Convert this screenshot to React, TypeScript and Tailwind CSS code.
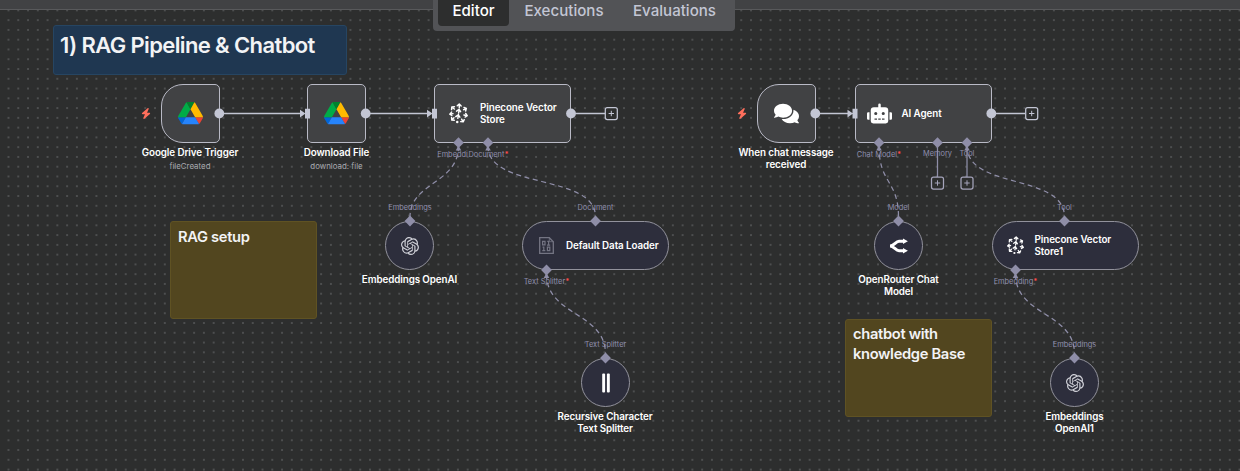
import React from "react";
import { FaComments, FaRobot } from "react-icons/fa";
import { FaBolt } from "react-icons/fa6";
import { SiOpenai } from "react-icons/si";

type Pos = { x: number; y: number };

const at = (x: number, y: number, w?: number, h?: number): React.CSSProperties => ({
  left: x,
  top: y,
  width: w,
  height: h,
});

function DriveIcon() {
  return (
    <svg width="25" height="22.3" viewBox="0 0 87.3 78">
      <path d="m6.6 66.85 3.85 6.65c.8 1.4 1.95 2.5 3.3 3.3l13.75-23.8h-27.5c0 1.55.4 3.1 1.2 4.5z" fill="#0066da" />
      <path d="m43.65 25-13.75-23.8c-1.35.8-2.5 1.9-3.3 3.3l-25.4 44a9.06 9.06 0 0 0 -1.2 4.5h27.5z" fill="#00ac47" />
      <path d="m73.55 76.8c1.35-.8 2.5-1.9 3.3-3.3l1.6-2.75 7.65-13.25c.8-1.4 1.2-2.95 1.2-4.5h-27.502l5.852 11.5z" fill="#ea4335" />
      <path d="m43.65 25 13.75-23.8c-1.35-.8-2.9-1.2-4.5-1.2h-18.5c-1.6 0-3.15.45-4.5 1.2z" fill="#00832d" />
      <path d="m59.8 53h-32.3l-13.75 23.8c1.35.8 2.9 1.2 4.5 1.2h50.8c1.6 0 3.15-.45 4.5-1.2z" fill="#2684fc" />
      <path d="m73.4 26.5-12.7-22c-.8-1.4-1.95-2.5-3.3-3.3l-13.75 23.8 16.15 28h27.45c0-1.55-.4-3.1-1.2-4.5z" fill="#ffba00" />
    </svg>
  );
}

function PineconeIcon({ size }: { size: number }) {
  return (
    <svg width={size} height={size * 1.1} viewBox="0 0 20 22" fill="none" stroke="#fff" strokeWidth="1.5" strokeLinecap="round" strokeLinejoin="round">
      <path d="M10.8 5V1.2M8.7 3l2.1-2 2 2.2M10.1 10.6l.7-3.8M8 8.6l2.6-2 1.6 2.6M9.3 16.2l.7-3.8M7.2 14.4l2.6-2 1.6 2.6" />
      <path d="M5.6 6.3 3 4.4M2.7 7l.2-2.8 2.8-.2M15.4 7.1l2.7-1.3M15.8 4.6l2.5 1.1-.8 2.7M4.2 11.2l-3.3.5M2.7 9.6.8 11.7l2.2 1.5M15.7 12.6l3.3.8M17.6 11l1.6 2.4-2.2 1.4M5.2 15.6l-2.2 2.2M2.7 15.3l.2 2.7 2.7.1M13.3 17l1.5 2.8M12.3 19.6l2.6.3 1.1-2.4" />
      <circle cx="8.700" cy="20" r="1.300" fill="#fff" stroke="none" />
    </svg>
  );
}

function DataIcon() {
  return (
    <svg width="15" height="17" viewBox="0 0 15 17" fill="none" stroke="#747583">
      <path d="M.7.7h9.6l4 4v11.6H.7z" strokeWidth="1.300" />
      <path d="M10.3.7v4h4" strokeWidth=".8" />
      <path d="M3.6 4.4h2.4v3.5H3.6zM8.3 4.400h1.300v3.700M8 8.100h3.200M3.600 10.200h1.200v3.500M3.300 13.700h3M8.400 10.200h2.400v3.500H8.400z" strokeWidth="1.200" />
    </svg>
  );
}

function RouterIcon() {
  return (
    <svg width="20" height="18" viewBox="0 0 20 18" fill="none" stroke="#fff" strokeWidth="3">
      <path d="M1 9c4 0 5.500-4.700 9-4.700h5M1 9c4 0 5.500 4.700 9 4.700h5" />
      <path d="M14 1.500v5.600L18.900 4.300zM14 10.900v5.600l4.900-2.800z" fill="#fff" stroke="none" />
    </svg>
  );
}

function SplitIcon() {
  return (
    <svg width="8" height="20" viewBox="0 0 8 20" fill="#fff">
      <rect x="0.200" y="0.500" width="2.900" height="19" rx="1" />
      <rect x="4.900" y="0.500" width="2.900" height="19" rx="1" />
    </svg>
  );
}

function Box({ x, w, trigger, children }: { x: number; w: number; trigger?: boolean; children: React.ReactNode }) {
  return (
    <div
      className={`absolute flex items-center border-[1.25px] border-[#b9bac6] bg-[#414244] ${
        trigger ? "justify-center rounded-l-[22px] rounded-r-[5px]" : w < 100 ? "justify-center rounded-[5px]" : "rounded-[5px]"
      }`}
      style={at(x, 84, w, 59)}
    >
      {children}
    </div>
  );
}

function Sub({ x, y, w, children }: { x: number; y: number; w: number; children: React.ReactNode }) {
  return (
    <div
      className={`absolute flex items-center rounded-full border border-[#92929c] bg-[#2d2e3c] ${w < 60 ? "justify-center" : ""}`}
      style={at(x, y, w, 49)}
    >
      {children}
    </div>
  );
}

function NodeText({ lines }: { lines: string[] }) {
  return (
    <div className="flex flex-col text-[9.8px] leading-[12px] font-semibold tracking-[-0.08px] whitespace-nowrap text-white">
      {lines.map((l) => (
        <span key={l}>{l}</span>
      ))}
    </div>
  );
}

function Title({ x, y, lines, sub }: Pos & { lines: string[]; sub?: string }) {
  return (
    <div className="absolute flex w-[140px] flex-col items-center text-center whitespace-nowrap" style={at(x - 70, y)}>
      <div className="flex flex-col items-center">
        {lines.map((l) => (
          <span key={l} className="text-[9.8px] leading-[12px] font-semibold tracking-[-0.08px] text-white">{l}</span>
        ))}
      </div>
      {sub && <span className="mt-[2px] text-[7.9px] leading-[11px] text-[#a8a9ae]">{sub}</span>}
    </div>
  );
}

function PortLabel({ x, y, text, required }: Pos & { text: string; required?: boolean }) {
  return (
    <div className="absolute flex w-[80px] justify-center whitespace-nowrap text-[7.4px] leading-[10px] text-[#8f8ead]" style={at(x - 40, y - 4)}>
      {text}
      {required && <span className="font-bold text-[#ff4a4a]">*</span>}
    </div>
  );
}

const dashed = [
  "M458.500 146C458.500 184 410 182 410 217",
  "M488 146C488 190 595.500 173 595.500 217",
  "M546.500 274C546.500 316 605.500 312 605.500 354",
  "M879 146C879 184 898.500 180 898.500 217",
  "M967 146C967 190 1064.500 173 1064.500 217",
  "M1015.500 274C1015.500 316 1074.500 312 1074.500 354",
];

const diamonds: Pos[] = [
  { x: 458.5, y: 142.7 }, { x: 488, y: 142.7 }, { x: 410, y: 221 }, { x: 595.5, y: 221 },
  { x: 546.5, y: 270 }, { x: 605.5, y: 358 }, { x: 879, y: 142.7 }, { x: 937.5, y: 142.7 },
  { x: 967, y: 142.7 }, { x: 898.5, y: 221 }, { x: 1064.5, y: 221 }, { x: 1015.5, y: 270 }, { x: 1074.5, y: 358 },
];

const stubs: Pos[] = [
  { x: 458.5, y: 148 }, { x: 488, y: 148 }, { x: 546.5, y: 275.5 },
  { x: 879, y: 148 }, { x: 967, y: 148 }, { x: 1015.5, y: 275.5 },
];

function Grid() {
  return (
    <svg className="absolute inset-0" width="1240" height="471">
      <defs>
        <pattern id="dots" x="3.610" y="5.500" width="9.770" height="9.770" patternUnits="userSpaceOnUse">
          <circle cx="4.885" cy="4.885" r="0.680" fill="#85868a" />
        </pattern>
      </defs>
      <rect width="1240" height="471" fill="url(#dots)" />
    </svg>
  );
}

function Edges() {
  return (
    <svg className="absolute inset-0" width="1240" height="471" fill="none">
      <g stroke="#c3c6d4" strokeWidth="1.300">
        <path d="M219 113.500H302M366 113.500H429M571 113.500H605M815 113.500H850M991 113.500H1025" />
      </g>
      <g stroke="#8f8ea8" strokeWidth="1.250">
        <path d="M937.500 146V177M967 146V177" />
        {dashed.map((d) => (
          <path key={d} d={d} strokeDasharray="5 3.600" />
        ))}
      </g>
    </svg>
  );
}

function Handles() {
  return (
    <svg className="absolute inset-0" width="1240" height="471" fill="none">
      <g fill="#c3c6d4">
        {[219.3, 365.7, 571, 815.3, 991.3].map((x) => (
          <circle key={x} cx={x} cy="113.500" r="4.900" />
        ))}
        {[307, 434, 854.5].map((x) => (
          <path key={x} d={`M${x - 2} 108.700h5v9.700h-5zM${x - 7} 109.700l5.500 3.900-5.500 3.900z`} />
        ))}
      </g>
      <g fill="#8f8ea8">
        {diamonds.map((p) => (
          <path key={`${p.x}-${p.y}`} d={`M${p.x} ${p.y - 5.4}l5.400 5.400-5.400 5.400-5.400-5.400z`} />
        ))}
        {stubs.map((p) => (
          <path key={p.x} d={`M${p.x - 2.8} ${p.y + 2.5}L${p.x} ${p.y - 2.5}l2.800 5z`} />
        ))}
      </g>
      {[
        { x: 611.3, y: 113.5, c: "#c3c6d4" }, { x: 1031.7, y: 113.5, c: "#c3c6d4" },
        { x: 937.5, y: 183, c: "#a5a4bb" }, { x: 967, y: 183, c: "#a5a4bb" },
      ].map((p) => (
        <g key={p.x} stroke={p.c}>
          <rect x={p.x - 6} y={p.y - 6} width="12" height="12" rx="2" fill="#2d2e2e" strokeWidth="1.250" />
          <path d={`M${p.x - 2.7} ${p.y}h5.400M${p.x} ${p.y - 2.7}v5.400`} />
        </g>
      ))}
    </svg>
  );
}

export default function App() {
  return (
    <div className="relative h-[471px] w-[1240px] overflow-hidden bg-[#2d2e2e] font-['Inter',sans-serif]">
      <Grid />
      <header className="relative z-10 flex h-[10px] justify-center border-b border-[#58595b] bg-[#414244]">
        <nav className="mr-[72px] flex h-[31px] w-[302px] shrink-0 rounded-b-[4px] bg-[#525356] px-[5px] text-[15.1px] leading-[21px] font-medium text-[#c3c6d4]">
          <span className="flex h-[26px] w-[71px] justify-center rounded-b-[4px] bg-[#2d2e2e] text-white">Editor</span>
          <span className="flex w-[110px] justify-center">Executions</span>
          <span className="flex w-[111px] justify-center">Evaluations</span>
        </nav>
      </header>

      <section className="absolute top-[25px] left-[53px] h-[50px] w-[294px] rounded-[3px] border border-[#264562] bg-[#1f3751] pt-[5px] pl-[6px]">
        <h1 className="text-[22px] leading-[28px] font-semibold tracking-[-0.62px] whitespace-nowrap text-[#f2f3f5]">1) RAG Pipeline &amp; Chatbot</h1>
      </section>
      <section className="absolute top-[221px] left-[170px] h-[98px] w-[147px] rounded-[3px] border border-[#5f5223] bg-[#52461f] pt-[5px] pl-[7px] text-[14.7px] leading-[20px] font-semibold tracking-[-0.32px] text-[#f2f3f5]">
        RAG setup
      </section>
      <section className="absolute top-[319px] left-[845px] h-[98px] w-[147px] rounded-[3px] border border-[#5f5223] bg-[#52461f] pt-[4px] pl-[7px] text-[14.7px] leading-[20px] font-semibold tracking-[-0.32px] text-[#f2f3f5]">
        chatbot with<br />knowledge Base
      </section>

      <Edges />

      <FaBolt className="absolute top-[108px] left-[141px] h-[11px] w-[10px] text-[#ff6f5c]" />
      <FaBolt className="absolute top-[108px] left-[737px] h-[11px] w-[10px] text-[#ff6f5c]" />

      <Box x={160.5} w={59} trigger><DriveIcon /></Box>
      <Box x={307} w={59}><DriveIcon /></Box>
      <Box x={434} w={137}>
        <span className="ml-[14px] flex"><PineconeIcon size={19} /></span>
        <div className="ml-[12px]"><NodeText lines={["Pinecone Vector", "Store"]} /></div>
      </Box>
      <Box x={757} w={59} trigger><FaComments className="h-[25px] w-[25px] text-white" /></Box>
      <Box x={854.5} w={137}>
        <FaRobot className="ml-[11px] h-[25px] w-[25px] text-white" />
        <div className="ml-[10px]"><NodeText lines={["AI Agent"]} /></div>
      </Box>

      <Sub x={385} y={221} w={49}><SiOpenai className="h-[18px] w-[18px] text-[#d0d1d8]" /></Sub>
      <Sub x={522} y={221} w={147}>
        <span className="ml-[16px] flex"><DataIcon /></span>
        <div className="ml-[12px]"><NodeText lines={["Default Data Loader"]} /></div>
      </Sub>
      <Sub x={581} y={358} w={49}><SplitIcon /></Sub>
      <Sub x={874} y={221} w={49}><RouterIcon /></Sub>
      <Sub x={991.5} y={221} w={147}>
        <span className="ml-[14px] flex"><PineconeIcon size={17} /></span>
        <div className="ml-[11px]"><NodeText lines={["Pinecone Vector", "Store1"]} /></div>
      </Sub>
      <Sub x={1050} y={358} w={49}><SiOpenai className="h-[18px] w-[18px] text-[#d0d1d8]" /></Sub>

      <Handles />

      <Title x={190} y={147} lines={["Google Drive Trigger"]} sub="fileCreated" />
      <Title x={336.5} y={147} lines={["Download File"]} sub="download: file" />
      <Title x={786} y={147} lines={["When chat message", "received"]} />
      <Title x={409.5} y={274} lines={["Embeddings OpenAI"]} />
      <Title x={605} y={411} lines={["Recursive Character", "Text Splitter"]} />
      <Title x={898.5} y={274} lines={["OpenRouter Chat", "Model"]} />
      <Title x={1074.5} y={411} lines={["Embeddings", "OpenAI1"]} />

      <PortLabel x={452.5} y={154} text="Embeddi" />
      <PortLabel x={488.5} y={154} text="Document" required />
      <PortLabel x={879} y={154} text="Chat Model" required />
      <PortLabel x={937.5} y={153} text="Memory" />
      <PortLabel x={967} y={153} text="Tool" />
      <PortLabel x={410} y={207} text="Embeddings" />
      <PortLabel x={595.5} y={207} text="Document" />
      <PortLabel x={546.5} y={281} text="Text Splitter" required />
      <PortLabel x={605.5} y={344} text="Text Splitter" />
      <PortLabel x={898.5} y={207} text="Model" />
      <PortLabel x={1064.5} y={207} text="Tool" />
      <PortLabel x={1015.5} y={281} text="Embedding" required />
      <PortLabel x={1074.5} y={344} text="Embeddings" />
    </div>
  );
}
